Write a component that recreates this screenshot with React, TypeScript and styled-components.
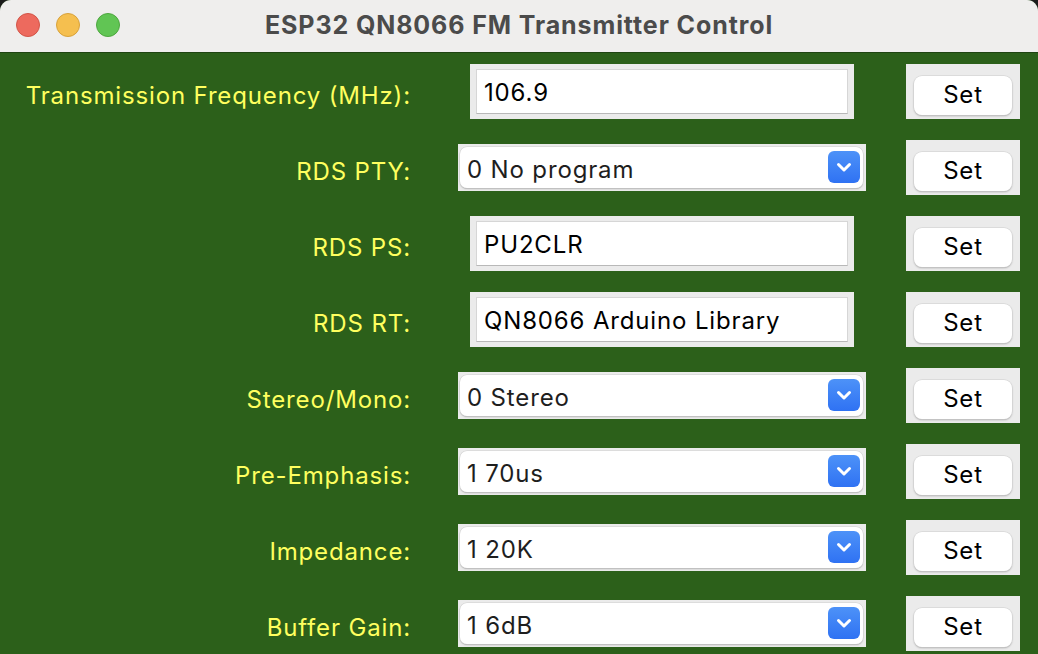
import React from 'react';
import styled, { createGlobalStyle } from 'styled-components';

type RowSpec = {
    label: string;
    kind: 'text' | 'select';
    value: string;
};

const rows: RowSpec[] = [
    { label: 'Transmission Frequency (MHz):', kind: 'text', value: '106.9' },
    { label: 'RDS PTY:', kind: 'select', value: '0 No program' },
    { label: 'RDS PS:', kind: 'text', value: 'PU2CLR' },
    { label: 'RDS RT:', kind: 'text', value: 'QN8066 Arduino Library' },
    { label: 'Stereo/Mono:', kind: 'select', value: '0 Stereo' },
    { label: 'Pre-Emphasis:', kind: 'select', value: '1 70us' },
    { label: 'Impedance:', kind: 'select', value: '1 20K' },
    { label: 'Buffer Gain:', kind: 'select', value: '1 6dB' },
];

const App: React.FC = () => {
    return (
        <>
            <GlobalStyle />
            <Window>
                <TitleBar>
                    <Lights>
                        <Light $color='#ed6a5e' $edge='#d25548' />
                        <Light $color='#f5bf4f' $edge='#d8a23b' />
                        <Light $color='#61c554' $edge='#4ea73f' />
                    </Lights>
                    <Title>ESP32 QN8066 FM Transmitter Control</Title>
                </TitleBar>
                <Body>
                    {rows.map((row) => (
                        <Row key={row.label}>
                            <Label>{row.label}</Label>
                            <FieldCell>
                                {row.kind === 'text' ? (
                                    <TextWell>
                                        <TextInput type='text' defaultValue={row.value} />
                                    </TextWell>
                                ) : (
                                    <SelectWell>
                                        <SelectBox>
                                            <SelectText>{row.value}</SelectText>
                                            <Chevron>
                                                <svg width='32' height='32' viewBox='0 0 32 32'>
                                                    <polyline
                                                        points='10.5,13.5 16,19 21.5,13.5'
                                                        fill='none'
                                                        stroke='#fff'
                                                        strokeWidth='3'
                                                        strokeLinecap='round'
                                                        strokeLinejoin='round'
                                                    />
                                                </svg>
                                            </Chevron>
                                        </SelectBox>
                                    </SelectWell>
                                )}
                            </FieldCell>
                            <SetWell>
                                <SetButton type='button'>Set</SetButton>
                            </SetWell>
                        </Row>
                    ))}
                </Body>
            </Window>
        </>
    );
};

const GlobalStyle = createGlobalStyle`
    html, body {
        margin: 0;
        padding: 0;
        background: #1b1b1b;
    }
    body {
        width: 1038px;
        height: 654px;
        overflow: hidden;
        font-family: Inter, "Liberation Sans", Arial, sans-serif;
    }
`;

const Window = styled.div`
    width: 1038px;
    height: 654px;
    display: flex;
    flex-direction: column;
    border-radius: 11px 11px 0 0;
    overflow: hidden;
    background: #2c601a;
`;

const TitleBar = styled.div`
    height: 53px;
    box-sizing: border-box;
    padding-bottom: 3px;
    flex-shrink: 0;
    display: grid;
    grid-template-columns: 1fr auto 1fr;
    align-items: center;
    background: #efeeed;
    border-bottom: 1px solid #1f4412;
`;

const Lights = styled.div`
    display: flex;
    gap: 16px;
    padding-left: 16px;
`;

const Light = styled.span<{ $color: string; $edge: string }>`
    width: 24px;
    height: 24px;
    border-radius: 50%;
    box-sizing: border-box;
    background: ${(p) => p.$color};
    border: 1px solid ${(p) => p.$edge};
`;

const Title = styled.div`
    font-size: 25px;
    font-weight: 700;
    color: #4b4b4b;
    letter-spacing: 0.9px;
`;

const Body = styled.div`
    display: flex;
    flex-direction: column;
`;

const Row = styled.div`
    height: 76px;
    display: flex;
    align-items: center;
    flex-shrink: 0;
`;

const Label = styled.div`
    width: 411px;
    text-align: right;
    font-size: 24px;
    color: #ffff5f;
    letter-spacing: 0.85px;
    padding-top: 8px;
    white-space: nowrap;
`;

const FieldCell = styled.div`
    width: 408px;
    margin-left: 47px;
    display: flex;
    justify-content: center;
`;

const TextWell = styled.div`
    width: 384px;
    height: 55px;
    box-sizing: border-box;
    padding: 5px 6px 5px 6px;
    background: #ebebeb;
`;

const TextInput = styled.input`
    width: 100%;
    height: 100%;
    box-sizing: border-box;
    margin: 0;
    border: 1px solid #d6d6d6;
    border-bottom-color: #b8b8b8;
    outline: none;
    background: #fff;
    padding: 2px 7px 0;
    font-family: Inter, "Liberation Sans", Arial, sans-serif;
    font-size: 24px;
    letter-spacing: 0.85px;
    color: #000;
`;

const SelectWell = styled.div`
    width: 408px;
    height: 47px;
    box-sizing: border-box;
    padding: 3px 3px 3px 2px;
    background: #ebebeb;
`;

const SelectBox = styled.div`
    height: 100%;
    box-sizing: border-box;
    display: flex;
    align-items: center;
    justify-content: space-between;
    padding: 0 3px 0 7px;
    background: #fff;
    border-radius: 7px;
    box-shadow: 0 0 0 0.5px #cfcfcf, 0 1px 1.5px rgba(0, 0, 0, 0.3);
`;

const SelectText = styled.span`
    font-size: 24px;
    letter-spacing: 0.85px;
    color: #1e1e1e;
    padding-top: 5px;
`;

const Chevron = styled.span`
    width: 32px;
    height: 32px;
    border-radius: 6px;
    display: flex;
    background: linear-gradient(#4d92f8, #2f72f3);
`;

const SetWell = styled.div`
    width: 114px;
    height: 55px;
    margin-left: 40px;
    box-sizing: border-box;
    padding: 12px 8px 4px 8px;
    background: #ebebeb;
    display: flex;
`;

const SetButton = styled.button`
    flex: 1;
    margin: 0;
    padding: 0 0 1px;
    border: none;
    border-radius: 8px;
    background: #fff;
    box-shadow: 0 0 0 0.5px #d0d0d0, 0 1px 2px rgba(0, 0, 0, 0.3);
    font-family: Inter, "Liberation Sans", Arial, sans-serif;
    font-size: 24px;
    letter-spacing: 0.8px;
    color: #000;
`;

export default App;
